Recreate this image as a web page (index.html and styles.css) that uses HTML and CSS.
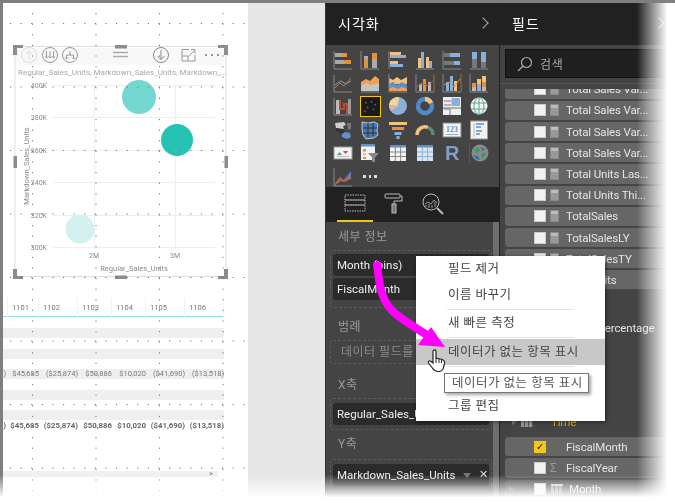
FILE: index.html
```html
<!DOCTYPE html>
<html lang="ko">
<head>
  <meta charset="UTF-8">
  <title>Power BI 시각화</title>
  <link rel="stylesheet" href="styles.css">
</head>
<body>
<div class="shot">

  <!-- report canvas -->
  <main class="report">
    <div class="sheet">
      <div class="visual">
        <svg class="chart" viewBox="15 46 211 231" width="211" height="231">
          <rect x="15" y="48" width="211" height="17" fill="#f8f8f8"/>
          <rect x="15" y="46.5" width="211" height="230" fill="none" stroke="#ddd"/>
          <g fill="none" stroke="#ccc" stroke-width="1">
            <circle cx="29" cy="55" r="7.5" stroke="#ddd"/><path d="M29 59.500V51M26 54l3-3 3 3" stroke="#ddd"/>
            <circle cx="50" cy="55" r="7.5" stroke="#999"/><path d="M46.500 51v7M50 51v7M53.500 51v7M45 56.500l1.500 1.500 1.500-1.500M48.500 56.500l1.500 1.500 1.500-1.500M52 56.500l1.500 1.500 1.500-1.500" stroke="#999"/>
            <circle cx="70" cy="55" r="7.500" stroke="#999"/><path d="M66.500 59v-4h7v4M70 55v-4M65 57.500l1.500 1.500 1.500-1.500M72 57.500l1.500 1.500 1.500-1.500" stroke="#999"/>
            <path d="M113 52.500h15M113 56.500h15" stroke="#aaa" stroke-width="1.300"/>
            <circle cx="161" cy="55" r="7.500" stroke="#888"/><path d="M161 50v9.500M157.500 56l3.500 3.500 3.500-3.500" stroke="#888"/>
            <path d="M189 49.500h-7v11.500h13v-6M188 61v-5h-6M188.500 56.500l6-6M191 49.500h4v4" stroke="#999"/>
          </g>
          <g fill="#777"><circle cx="206" cy="55" r="1"/><circle cx="212" cy="55" r="1"/><circle cx="218" cy="55" r="1"/></g>
          <text x="18" y="75" class="t-sub">Regular_Sales_Units, Markdown_Sales_Units, Markdown_...</text>
          <g stroke="#eee" stroke-width="1">
            <path d="M53 85.500h162M53 117.500h162M53 150.500h162M53 182.500h162M53 215.500h162M53 247.500h162"/>
            <path d="M94.500 85v162M175.500 85v162"/>
          </g>
          <g class="t-num" text-anchor="end">
            <text x="47" y="88">400K</text><text x="47" y="120">380K</text><text x="47" y="153">360K</text>
            <text x="47" y="185">340K</text><text x="47" y="218">320K</text><text x="47" y="250">300K</text>
          </g>
          <g class="t-num" text-anchor="middle">
            <text x="94" y="258">2M</text><text x="175" y="258">3M</text>
          </g>
          <g class="t-axis" text-anchor="middle">
            <text x="134" y="271">Regular_Sales_Units</text>
            <text transform="translate(28.500 166) rotate(-90)">Markdown_Sales_Units</text>
          </g>
          <circle cx="139" cy="97" r="17" fill="#72d8d0"/>
          <circle cx="177" cy="140" r="16" fill="#26c3b5"/>
          <circle cx="80" cy="229" r="14.500" fill="#d3f1ee"/>
          <g fill="#8c8c8c">
            <path d="M13 45h10v3h-6v7h-4z"/><path d="M228 45h-10v3h6v7h4z"/>
            <path d="M13 279h10v-3h-6v-7h-4z"/><path d="M228 279h-10v-3h6v-7h4z"/>
            <rect x="115" y="45" width="12" height="3.500"/><rect x="115" y="275.500" width="12" height="3.500"/>
            <rect x="13.500" y="156" width="3.500" height="12"/><rect x="224.500" y="156" width="3.500" height="12"/>
          </g>
        </svg>
      </div>

      <div class="table">
        <div class="t-row t-head">
          <span></span><span>1101</span><span>1102</span><span>1103</span><span>1104</span><span>1105</span><span>1106</span>
        </div>
        <div class="band"></div>
        <div class="band"></div>
        <div class="band t-row t-val">
          <span>)</span><span>$45,685</span><span>($25,874)</span><span>$50,886</span><span>$10,020</span><span>($41,690)</span><span>($13,518)</span>
        </div>
        <div class="band"></div>
        <div class="band band-last"></div>
        <div class="t-row t-val t-total">
          <span>)</span><span>$45,685</span><span>($25,874)</span><span>$50,886</span><span>$10,020</span><span>($41,690)</span><span>($13,518)</span>
        </div>
      </div>
      <div class="hscroll"><span>&gt;</span></div>
    </div>
    <svg class="dots" width="245" height="500">
      <g stroke="#777" stroke-width="1" stroke-dasharray="1.200 9.400" fill="none">
        <path d="M7 20.500H245M7 84H245M7 147.500H245M7 211H245M7 274.500H245M7 338H245M7 401.500H245M7 465H245"/>
        <path d="M29.500 10V500M93 10V500M156.500 10V500M220 10V500"/>
      </g>
    </svg>
  </main>

  <!-- visualizations pane -->
  <aside class="pane viz">
    <header class="pane-head"><h2>시각화</h2><span class="chev"></span></header>
    <div class="gallery">
      <svg class="ico" viewBox="0 0 20 20"><path d="M1 1v18h18" class="ax"/><rect x="2" y="3" width="7" height="4" fill="#aaa"/><rect x="9" y="3" width="5" height="4" fill="#e88f3c"/><rect x="2" y="10" width="11" height="4" fill="#aaa"/><rect x="11" y="10" width="7" height="4" fill="#e88f3c"/></svg>
      <svg class="ico" viewBox="0 0 20 20"><path d="M1 1v18h18" class="ax"/><rect x="4" y="8" width="4" height="10" fill="#e88f3c"/><rect x="4" y="6" width="4" height="3" fill="#aaa"/><rect x="12" y="3" width="5" height="15" fill="#aaa"/><rect x="12" y="3" width="5" height="6" fill="#e88f3c"/></svg>
      <svg class="ico" viewBox="0 0 20 20"><path d="M1 1v18" class="ax"/><rect x="2" y="2" width="11" height="3" fill="#f0c27b"/><rect x="2" y="5" width="16" height="3" fill="#8ab0d8"/><rect x="2" y="11" width="8" height="3" fill="#f0c27b"/><rect x="2" y="14" width="13" height="3" fill="#8ab0d8"/></svg>
      <svg class="ico" viewBox="0 0 20 20"><path d="M1 19h18" class="ax"/><rect x="3" y="8" width="3" height="10" fill="#f0c27b"/><rect x="6" y="2" width="3" height="16" fill="#8ab0d8"/><rect x="11" y="7" width="3" height="11" fill="#f0c27b"/><rect x="14" y="11" width="3" height="7" fill="#8ab0d8"/></svg>
      <svg class="ico" viewBox="0 0 20 20"><path d="M1 1v18h18" class="ax"/><rect x="2" y="3" width="6" height="4" fill="#777"/><rect x="8" y="3" width="10" height="4" fill="#8ab0d8"/><rect x="2" y="11" width="10" height="4" fill="#777"/><rect x="12" y="11" width="6" height="4" fill="#8ab0d8"/></svg>
      <svg class="ico" viewBox="0 0 20 20"><path d="M1 19h18" class="ax"/><rect x="3" y="2" width="5" height="7" fill="#8ab0d8"/><rect x="3" y="9" width="5" height="9" fill="#777"/><rect x="12" y="2" width="5" height="10" fill="#8ab0d8"/><rect x="12" y="12" width="5" height="6" fill="#777"/></svg>

      <svg class="ico" viewBox="0 0 20 20"><path d="M1 2v17h18" class="ax"/><path d="M2 15l5-5 4 3 7-8" fill="none" stroke="#b57a47"/><path d="M2 12l6-4 5 3 5-3" fill="none" stroke="#7f9fc0"/></svg>
      <svg class="ico" viewBox="0 0 20 20"><path d="M1 9l5-3 4 2 5-5 4 3v12H1z" fill="#f0a050"/><path d="M1 13l5-3 5 2 8-2v8H1z" fill="#c4c4c4"/><path d="M1 19h18" class="ax"/></svg>
      <svg class="ico" viewBox="0 0 20 20"><path d="M1 5l4 2 4-3 4 3 6-3v7H1z" fill="#f0c27b"/><path d="M1 11l4-2 4 3 5-3 5 3v4H1z" fill="#5f90c8"/><path d="M1 15l4-1 5 2 4-2 5 2v2H1z" fill="#f0a050"/><path d="M1 1v18h18" class="ax"/></svg>
      <svg class="ico" viewBox="0 0 20 20"><path d="M1 1v18h18" class="ax"/><path d="M19 1v18" stroke="#a86a30"/><rect x="4" y="11" width="3" height="7" fill="#bbb"/><rect x="8" y="6" width="3" height="12" fill="#e88f3c"/><rect x="13" y="9" width="3" height="9" fill="#bbb"/><path d="M2 14l5-4 5 3 6-5" fill="none" stroke="#d05a40"/></svg>
      <svg class="ico" viewBox="0 0 20 20"><path d="M1 1v18h18" class="ax"/><path d="M19 1v18" stroke="#a86a30"/><rect x="4" y="9" width="3" height="9" fill="#8ab0d8"/><rect x="8" y="3" width="3" height="15" fill="#8ab0d8"/><rect x="12" y="8" width="3" height="10" fill="#f0c27b"/><path d="M2 12l5-3 5 5 6-8" fill="none" stroke="#e88f3c"/></svg>
      <svg class="ico" viewBox="0 0 20 20"><path d="M1 1v18h18" class="ax"/><rect x="3" y="10" width="4" height="4" fill="#e88f3c"/><rect x="3" y="14" width="4" height="4" fill="#bbb"/><rect x="8" y="6" width="4" height="5" fill="#f0c27b"/><rect x="8" y="11" width="4" height="7" fill="#8ab0d8"/><rect x="13" y="3" width="4" height="6" fill="#f0c27b"/><rect x="13" y="9" width="4" height="5" fill="#e88f3c"/><rect x="13" y="14" width="4" height="4" fill="#bbb"/></svg>

      <svg class="ico" viewBox="0 0 20 20"><path d="M1 2v17h18" class="ax"/><rect x="3" y="4" width="4" height="14" fill="#bbb"/><path d="M7 4v9h4V8h3v10" fill="none" stroke="#c0492f" stroke-width="2"/><rect x="15" y="3" width="3" height="15" fill="#999"/></svg>
      <span class="ico ico-on"><svg viewBox="0 0 20 20"><g fill="#666"><circle cx="5" cy="6" r="1"/><circle cx="11" cy="5" r="1"/><circle cx="15" cy="8" r="1"/><circle cx="7" cy="11" r="1"/><circle cx="13" cy="13" r="1"/><circle cx="4" cy="15" r="1"/></g></svg></span>
      <svg class="ico" viewBox="0 0 20 20"><circle cx="10" cy="10" r="9" fill="#8ab0d8"/><path d="M10 10L7 1.500A9 9 0 0 1 11 1z" fill="#f0d5a0"/><path d="M10 10L1 9A9 9 0 0 1 7 1.500z" fill="#f0d5a0"/><path d="M10 10L1 9A9 9 0 0 0 3 15z" fill="#eab0a0"/></svg>
      <svg class="ico" viewBox="0 0 20 20"><circle cx="10" cy="10" r="7" fill="none" stroke="#4f8ac8" stroke-width="4.500"/><path d="M10 3a7 7 0 0 1 6 4" fill="none" stroke="#f0c27b" stroke-width="4.500"/></svg>
      <svg class="ico" viewBox="0 0 20 20"><rect x="1" y="1" width="18" height="18" fill="#eee"/><path d="M2 5h7M2 9h7M2 13h5M12 3h6M12 8h6" stroke="#777"/><rect x="9.500" y="2" width="8.500" height="8" fill="#8ab0d8"/><path d="M1 12h18M8 12v7" stroke="#777"/></svg>
      <svg class="ico" viewBox="0 0 20 20"><circle cx="10" cy="10" r="8.500" fill="#f4f4f4"/><path d="M10 1.500a5 8.500 0 0 0 0 17 5 8.500 0 0 0 0-17zM2 7h16M2 13h16M10 1.500v17" fill="none" stroke="#5aa58f"/></svg>

      <svg class="ico" viewBox="0 0 20 20"><path d="M2 3l9-1 2 3-3 1 1 3H7L3 8z" fill="#cfcfcf"/><path d="M3 8l8 1 1 3-3 2-6-3z" fill="#333"/><path d="M9 14l3-2 5 1 1 4-4 2-5-2z" fill="#5f90c8"/><path d="M14 3h4v6l-3 1z" fill="#777"/></svg>
      <svg class="ico" viewBox="0 0 20 20"><path d="M2 2l6 1 6-1 4 2-1 7 1 4-4 3-8 1-3-4-1-6z" fill="#4a78ad" stroke="#ddd" stroke-width=".8"/><path d="M3 8h14M8 3v14M13 3v13M3 13h14" stroke="#222" stroke-width=".8" fill="none"/></svg>
      <svg class="ico" viewBox="0 0 20 20"><rect x="1" y="2" width="18" height="3" fill="#f0c27b"/><rect x="4" y="7" width="12" height="3" fill="#e88f3c"/><rect x="6.500" y="12" width="7" height="3" fill="#8ab0d8"/><rect x="8.500" y="16" width="3" height="3" fill="#8ab0d8"/></svg>
      <svg class="ico" viewBox="0 0 20 20"><path d="M2 15a8 8 0 0 1 11-7.500" fill="none" stroke="#f0c27b" stroke-width="3.500"/><path d="M13 7.500a8 8 0 0 1 5 7.500" fill="none" stroke="#5f8a78" stroke-width="3.500"/></svg>
      <svg class="ico" viewBox="0 0 20 20"><rect x="1" y="3" width="18" height="14" fill="#f2f2f2" stroke="#888"/><text x="10" y="12" class="t-123">123</text><path d="M4 14.500h12" stroke="#8ab0d8"/></svg>
      <svg class="ico" viewBox="0 0 20 20"><rect x="1.500" y="1" width="17" height="18" fill="#f2f2f2" stroke="#999"/><path d="M5 3v14" stroke="#bbb"/><path d="M7 4h8M7 7h5M7 11h6M7 14h4" stroke="#5f90c8" stroke-width="1.600"/></svg>

      <svg class="ico" viewBox="0 0 20 20"><rect x="1" y="4" width="18" height="12" fill="#f2f2f2" stroke="#999"/><path d="M4 12l2.500-3 2.500 3z" fill="#4aa580"/><path d="M10 8h5l-2.500 3z" fill="#d0483a"/><path d="M4 13.500h12" stroke="#bbb"/></svg>
      <svg class="ico" viewBox="0 0 20 20"><rect x="1" y="1" width="14" height="16" fill="#f2f2f2"/><rect x="1" y="1" width="14" height="2.500" fill="#5f90c8"/><rect x="3" y="6" width="3" height="2.500" fill="#e88f3c"/><rect x="3" y="10" width="3" height="2.500" fill="#f0c27b"/><rect x="3" y="14" width="3" height="2" fill="#e88f3c"/><path d="M8 10h11l-4 4.500V19h-3v-4.500z" fill="#888"/></svg>
      <svg class="ico" viewBox="0 0 20 20"><rect x="2" y="2" width="16" height="16" fill="#f2f2f2"/><rect x="2" y="2" width="16" height="2.500" fill="#5f90c8"/><path d="M2 9h16M2 13.500h16M7.300 4v14M12.600 4v14" stroke="#888"/></svg>
      <svg class="ico" viewBox="0 0 20 20"><rect x="2" y="2" width="16" height="16" fill="#dde6f0"/><rect x="2" y="2" width="16" height="2.500" fill="#5f90c8"/><path d="M2 9h16M2 13.500h16M7.300 4v14M12.600 4v14" stroke="#8ab0d8"/></svg>
      <span class="ico ico-r">R</span>
      <svg class="ico" viewBox="0 0 20 20"><path d="M.5 0v20" stroke="#555"/><circle cx="11" cy="10" r="8.500" fill="#8a8a8a"/><path d="M5 7l4-3 2 3-3 4zM12 11l4-2 1 3-4 4z" fill="#3a9a6a"/><path d="M4 12l5 1 2 4-4-1zM11 4l5 2-2 2z" fill="#3a6ab0"/></svg>

      <svg class="ico" viewBox="0 0 20 20"><path d="M1 1v18h18" class="ax"/><path d="M2 18l5-6 3 2 8-10v8l-7 3-3-1z" fill="#5f7fb0"/><path d="M2 18l5-7 4 3 7-4" fill="none" stroke="#d0603a" stroke-width="1.500"/></svg>
      <span class="ico ico-more"><i></i><i></i><i></i></span>
    </div>
    <nav class="tabs">
      <span class="tab tab-on">
        <svg viewBox="0 0 22 20" width="22" height="20" fill="none" stroke="#bbb" stroke-dasharray="1.500 1"><path d="M1 2h20v5H1zM1 7h20v5H1zM1 12h20v6H1z"/></svg>
      </span>
      <span class="tab">
        <svg viewBox="0 0 20 22" width="20" height="22" fill="none" stroke="#bbb"><rect x="1" y="1" width="15" height="4" rx="1"/><path d="M16 3h2v5h-8v3"/><rect x="8" y="11" width="4" height="9" fill="#777"/></svg>
      </span>
      <span class="tab">
        <svg viewBox="0 0 22 22" width="22" height="22" fill="none" stroke="#bbb"><circle cx="9" cy="9" r="8"/><path d="M15 15l6 6" stroke-width="2"/><path d="M3 11l3-2 3 2 3-4 3 3M4 14v-2M7 15v-4M10 15v-3M13 14V9" stroke="#999"/></svg>
      </span>
    </nav>
    <div class="wells">
      <h3>세부 정보</h3>
      <div class="dropzone dz-first">
        <div class="well">Month (bins)</div>
        <div class="well">FiscalMonth</div>
      </div>
      <h3>범례</h3>
      <div class="dropzone dz-empty">데이터 필드를</div>
      <h3>X축</h3>
      <div class="dropzone">
        <div class="well">Regular_Sales_Units</div>
      </div>
      <h3 class="h-last">Y축</h3>
      <div class="dropzone">
        <div class="well">Markdown_Sales_Units<i class="caret"></i><span class="close">✕</span></div>
      </div>
    </div>
    <span class="thumb"></span>
  </aside>

  <!-- fields pane -->
  <aside class="pane fields">
    <header class="pane-head"><h2>필드</h2><span class="chev"></span></header>
    <div class="search-row">
      <div class="search">
        <svg viewBox="0 0 16 16" width="16" height="16" fill="none" stroke="#aaa" stroke-width="1.200"><circle cx="9.500" cy="6.500" r="5"/><path d="M6 10l-5 5"/></svg>
        <span>검색</span>
      </div>
    </div>
    <ul class="field-list">
      <li class="field clip-first"><b class="chk"></b><i class="calc"></i>Total Sales Var...</li>
      <li class="field"><b class="chk"></b><i class="calc"></i>Total Sales Var...</li>
      <li class="field"><b class="chk"></b><i class="calc"></i>Total Sales Var...</li>
      <li class="field"><b class="chk"></b><i class="calc"></i>Total Sales Var...</li>
      <li class="field"><b class="chk"></b><i class="calc"></i>Total Units Las...</li>
      <li class="field"><b class="chk"></b><i class="calc"></i>Total Units Thi...</li>
      <li class="field"><b class="chk"></b><i class="calc"></i>TotalSales</li>
      <li class="field"><b class="chk"></b><i class="calc"></i>TotalSalesLY</li>
      <li class="field"><b class="chk"></b><i class="calc"></i>TotalSalesTY</li>
      <li class="field"><b class="chk"></b><i class="calc"></i>TotalUnits</li>
      <li class="field field-plain">Markdown_Percentage</li>
      <li class="group"><i class="tri"></i><i class="tbl"></i>Time</li>
      <li class="field"><b class="chk chk-on">✓</b><i class="blank"></i>FiscalMonth</li>
      <li class="field"><b class="chk"></b><i class="sigma">Σ</i>FiscalYear</li>
      <li class="field field-sub"><i class="tri"></i><b class="chk"></b><i class="tbl"></i>Month</li>
    </ul>
  </aside>

  <!-- overlays: context menu, callout arrow, cursor, torn edge -->
  <div class="menu">
    <div class="menu-item">필드 제거</div>
    <div class="menu-item">이름 바꾸기</div>
    <hr>
    <div class="menu-item">새 빠른 측정</div>
    <hr>
    <div class="menu-item menu-hot">데이터가 없는 항목 표시</div>
    <hr>
    <div class="menu-gap"></div>
    <div class="menu-item">그룹 편집</div>
  </div>
  <div class="tip">데이터가 없는 항목 표시</div>

  <svg class="arrow" width="675" height="503" viewBox="0 0 675 503">
    <path d="M377 262C379 285 381 303 397 315C405 321 414 327 427 335" fill="none" stroke="#ff00ff" stroke-width="8"/>
    <path d="M445 347L418 345L431 327z" fill="#ff00ff"/>
  </svg>
  <svg class="cursor" width="20" height="24" viewBox="0 0 20 24">
    <path d="M6 2c1-1.500 3-1.500 3 .5V9l6 1.500c2 .5 3 1.500 2.500 4l-1 4c-.5 2.500-2 4-5 4-3.500 0-5-1.500-6.500-4L1.500 14c-1-1.500 1-3 2.500-1.500L6 14z" fill="#fff" stroke="#222" stroke-width="1.200"/>
    <path d="M9 9v5M12 10v4M14.500 11v3" stroke="#222"/>
  </svg>
  <div class="fade fade-right"></div>
  <div class="fade fade-bottom"></div>
</div>
</body>
</html>
```

FILE: styles.css
```css
* {
  box-sizing: border-box;
}
html, body {
  margin: 0;
  padding: 0;
  background: #fff;
}
body {
  font-family: Roboto, "Noto Sans CJK KR", sans-serif;
}
.shot {
  position: relative;
  width: 675px;
  height: 503px;
  overflow: hidden;
  display: flex;
  border-top: 3px solid #7f7f7f;
  filter: blur(.3px);
}

/* report canvas */
.report {
  position: relative;
  flex: 0 0 325px;
  background: #e6e6e6;
  border-left: 3px solid #7f7f7f;
}
.sheet {
  width: 245px;
  height: 100%;
  background: #fff;
  padding: 43px 0 0 12px;
  overflow: hidden;
}
.visual {
  width: 211px;
  height: 231px;
}
.chart {
  display: block;
  overflow: visible;
}
.t-sub {
  font-size: 8px;
  fill: #a8a8a8;
}
.t-axis {
  font-size: 7.500px;
  fill: #8a8a8a;
}
.t-num {
  font-size: 7px;
  fill: #8a8a8a;
}
.table {
  margin: 21px 0 0 -12px;
  width: 221px;
  font-size: 7.500px;
  color: #777;
}
.t-row {
  display: grid;
  grid-template-columns: 3px 33px 39px 34px 34px 39px 39px;
}
.t-head {
  height: 19px;
  line-height: 19px;
  border-bottom: 1px solid #8fdcd4;
  margin-bottom: 11px;
}
.t-head span {
  padding-left: 4px;
  border-right: 1px solid #e8f6f5;
}
.t-head span:nth-child(2) {
  padding-left: 6px;
}
.band {
  height: 10px;
  margin-bottom: 10.500px;
  background: #efefef;
}
.band-last {
  margin-bottom: 1px;
}
.t-val {
  line-height: 10px;
  text-align: right;
}
.t-total {
  font-size: 7.800px;
  font-weight: 700;
  color: #666;
}
.hscroll {
  margin: 40px 0 0 -12px;
  width: 215px;
  height: 6px;
  background: #f0f0f0;
  font-size: 7px;
  line-height: 6px;
  text-align: right;
  padding-right: 5px;
  color: #666;
}
.dots {
  position: absolute;
  left: 0;
  top: 0;
  pointer-events: none;
}

/* panes */
.pane {
  position: relative;
  flex: 0 0 175px;
  min-width: 0;
  background: #444;
  color: #fff;
}
.viz {
  border-right: 1px solid #222;
  border-left: 1px solid #333;
}
.pane-head {
  height: 42px;
  background: #212121;
  display: flex;
  align-items: center;
  justify-content: space-between;
  padding: 0 12px 2px 12px;
}
.pane-head h2 {
  margin: 0;
  font-size: 14px;
  font-weight: 400;
  letter-spacing: 1px;
}
.chev {
  width: 8px;
  height: 8px;
  border-top: 1px solid #aaa;
  border-right: 1px solid #aaa;
  transform: rotate(45deg);
}
.gallery {
  height: 142px;
  padding: 3px 0 0 7px;
  display: grid;
  grid-template-columns: repeat(6, 27.300px);
  grid-auto-rows: 23.400px;
  align-items: center;
}
.ico {
  display: block;
  width: 20px;
  height: 20px;
}
.ax {
  fill: none;
  stroke: #888;
}
.ico-on {
  width: 21px;
  height: 21px;
  background: #1a1a1a;
  border: 1.500px solid #f2c811;
}
.ico-on svg {
  display: block;
}
.ico-r {
  font: 700 20px/20px "Liberation Sans", sans-serif;
  color: #7f9fc4;
  text-align: center;
}
.t-123 {
  font: 700 8px "Liberation Serif", serif;
  fill: #5f90c8;
  text-anchor: middle;
}
.ico-more {
  display: flex;
  align-items: center;
  gap: 3px;
  padding-left: 3px;
}
.ico-more i {
  width: 2.500px;
  height: 2.500px;
  background: #ddd;
}
.tabs {
  height: 35px;
  background: #212121;
  display: flex;
  gap: 3px;
  padding-left: 11px;
}
.tab {
  width: 36px;
  padding-top: 6px;
  display: flex;
  justify-content: center;
  border-bottom: 2px solid transparent;
}
.tab-on {
  border-bottom-color: #f2c811;
}
.wells {
  padding: 6px 7px 0 4px;
}
.wells h3 {
  margin: 0 0 4px 8px;
  height: 18px;
  font-size: 12px;
  line-height: 18px;
  font-weight: 400;
  color: #9a9a9a;
  letter-spacing: .5px;
}
.wells .h-last {
  margin-bottom: 6px;
}
.dropzone {
  border: 1px dashed #5c5c5c;
  border-radius: 3px;
  padding: 4px 2px;
  margin-bottom: 5px;
  display: flex;
  flex-direction: column;
  gap: 2px;
}
.dz-first {
  padding: 3px 2px 7px;
  margin-bottom: 10px;
}
.well {
  height: 22px;
  padding-left: 4px;
  background: #2b2b2b;
  border-radius: 3px;
  font-size: 11.500px;
  line-height: 22px;
  color: #eee;
  display: flex;
  align-items: center;
}
.caret {
  margin-left: 7px;
  border: 4px solid transparent;
  border-top: 5px solid #777;
  border-bottom: 0;
}
.close {
  margin-left: 8px;
  font-size: 11px;
  color: #ddd;
}
.dz-empty {
  display: block;
  height: 24px;
  padding: 0 0 0 10px;
  margin-bottom: 12px;
  font-size: 12px;
  line-height: 22px;
  color: #8c8c8c;
  letter-spacing: .5px;
}
.thumb {
  position: absolute;
  right: 0;
  top: 219px;
  width: 6px;
  height: 280px;
  background: #6e6e6e;
}

/* fields pane */
.search-row {
  height: 39px;
  padding: 4px 5px;
  border-bottom: 1px solid #555;
}
.search {
  height: 29px;
  background: #1f1f1f;
  border: 1px solid #111;
  display: flex;
  align-items: center;
  gap: 7px;
  padding-left: 11px;
  font-size: 12px;
  color: #aaa;
  letter-spacing: .8px;
}
.field-list {
  list-style: none;
  margin: 5px 0 0;
  padding: 0 0 0 5px;
  height: 410px;
  overflow: hidden;
  font-size: 11.500px;
  letter-spacing: -.15px;
  color: #e4e4e4;
}
.field {
  display: flex;
  align-items: center;
  height: 19.200px;
  margin-bottom: 2px;
  padding-left: 29px;
  background: #666;
  border-radius: 3px;
  white-space: nowrap;
}
.clip-first {
  margin-top: -9.400px;
}
.chk {
  flex: none;
  width: 12px;
  height: 12px;
  background: #f2f2f2;
  border: 1px solid #ccc;
  margin-right: 4px;
}
.chk-on {
  background: #f2c811;
  border-color: #f2c811;
  color: #222;
  font: 700 10px/10px "DejaVu Sans", sans-serif;
  text-align: center;
}
.calc, .blank, .sigma {
  flex: none;
  width: 9px;
  height: 12px;
  margin-right: 7px;
}
.calc {
  background: #999;
  border: 1px solid #888;
  box-shadow: inset 0 3px 0 #bbb;
}
.sigma {
  font-style: normal;
  font-size: 12px;
  line-height: 12px;
  color: #999;
}
.field-plain {
  background: none;
  margin-top: 29px;
  padding-left: 35px;
  margin-bottom: 0;
}
.group {
  display: flex;
  align-items: center;
  height: 20px;
  margin: 74px 0 5.500px 7px;
  color: #e0b010;
}
.tri {
  flex: none;
  border: 3.500px solid transparent;
  border-left: 5px solid #777;
  border-right: 0;
  margin-right: 4px;
}
.tbl {
  flex: none;
  width: 12px;
  height: 10px;
  margin-right: 18px;
  background: repeating-linear-gradient(90deg, #999 0 3px, #555 3px 4px);
  border-top: 2px solid #ccc;
}
.field-sub {
  padding-left: 4px;
  background: #555;
}
.field-sub .tri {
  margin-right: 20px;
}
.field-sub .chk {
  margin-right: 5px;
}
.field-sub .tbl {
  margin-right: 6px;
}

/* context menu and overlays */
.menu {
  position: absolute;
  left: 416px;
  top: 253px;
  width: 189px;
  height: 165px;
  background: #fff;
  box-shadow: 1px 1px 4px rgba(0,0,0,.5);
  font-size: 12.500px;
  color: #444;
  letter-spacing: .5px;
}
.menu-item {
  height: 26px;
  line-height: 26px;
  padding-left: 32px;
}
.menu hr {
  margin: 1px 31px 0;
  border: 0;
  border-top: 1px solid #e4e4e4;
}
.menu-hot {
  background: #c8c8c8;
  margin-top: 1px;
}
.menu-gap {
  height: 26px;
}
.tip {
  position: absolute;
  left: 444px;
  top: 370px;
  width: 145px;
  height: 20px;
  background: #fff;
  border: 1px solid #777;
  box-shadow: 2px 2px 3px rgba(0,0,0,.35);
  font-size: 12.500px;
  line-height: 17px;
  padding-left: 7px;
  color: #555;
  letter-spacing: .5px;
  white-space: nowrap;
}
.arrow {
  position: absolute;
  left: 0;
  top: -3px;
  pointer-events: none;
}
.cursor {
  position: absolute;
  left: 427px;
  top: 346px;
}
.fade {
  position: absolute;
  pointer-events: none;
}
.fade-right {
  top: 0;
  right: 0;
  width: 38px;
  height: 100%;
  background: linear-gradient(90deg, rgba(255,255,255,0), #fff 80%);
}
.fade-bottom {
  left: 0;
  bottom: 0;
  width: 100%;
  height: 28px;
  background: linear-gradient(rgba(255,255,255,0), #fff 80%);
}
```
